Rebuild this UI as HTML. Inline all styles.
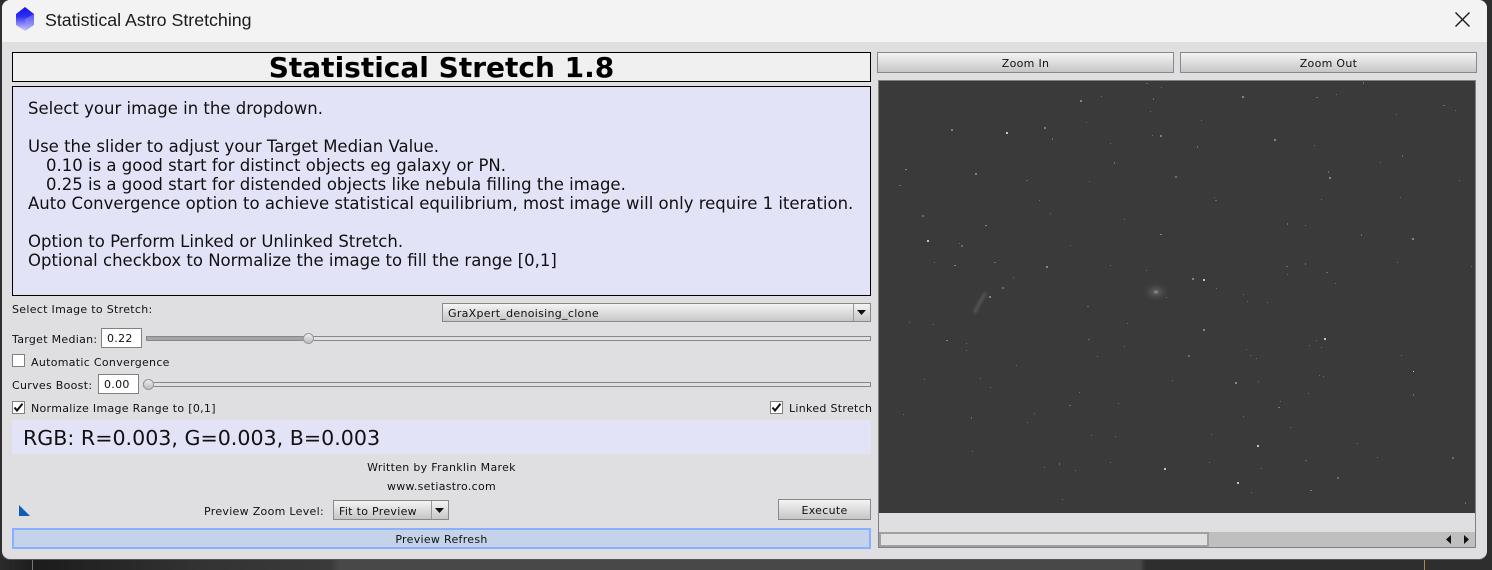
<!DOCTYPE html>
<html><head><meta charset="utf-8"><style>
html,body{margin:0;padding:0;background:#2e2e2e;width:1492px;height:570px;overflow:hidden}
*{box-sizing:border-box}
.a{position:absolute;white-space:pre}
body{font-family:"DejaVu Sans",sans-serif;color:#111}
.s{font-size:11px;line-height:14px;letter-spacing:.3px}
.btn{position:absolute;border:1px solid #888;background:linear-gradient(#f4f4f4,#c6c6c6);font-size:11px;letter-spacing:.3px;text-align:center;color:#111}
.cb{position:absolute;width:13px;height:13px;background:#fff;border:1px solid #808080}
.l{position:absolute;left:28px;font-size:16.5px;line-height:19px;white-space:pre;color:#111}
</style></head><body>
<div class="a" style="left:0;top:559px;width:1492px;height:11px;background:linear-gradient(90deg,#2b2b2b 0,#1c1c1c 36px,#333 200px,#3a3a3a 330px,#484848 340px,#484848 1140px,#2e2e2e 1146px)"></div>
<div class="a" style="left:32px;top:559px;width:1px;height:11px;background:#777"></div>
<div class="a" style="left:1424px;top:559px;width:1px;height:11px;background:#a98850"></div>
<div class="a" style="left:2px;top:0;width:1485px;height:559px;background:#dfdfe1;border-radius:8px;box-shadow:0 1px 0 #555"></div>
<div class="a" style="left:2px;top:0;width:1485px;height:42px;background:#f3f3f3;border-radius:8px 8px 0 0"></div>
<svg class="a" style="left:14px;top:6px" width="24" height="26" viewBox="0 0 24 26"><defs><linearGradient id="g" x1="0" y1="0" x2="0" y2="1"><stop offset="0" stop-color="#1212f0"/><stop offset=".4" stop-color="#3030f0"/><stop offset="1" stop-color="#d4d4ff"/></linearGradient></defs><path d="M11 1 20 8V19L11 25 2 19V8Z" fill="url(#g)"/><path d="M11 13 20 8V19L11 25Z" fill="#9a9af4" opacity=".45"/></svg>
<div class="a" style="left:45px;top:9px;font-family:'Liberation Sans',sans-serif;font-size:17.8px;line-height:23px;color:#1a1a1a">Statistical Astro Stretching</div>
<svg class="a" style="left:1454px;top:11px" width="18" height="18"><path d="M1.500 1.500 15.500 15.500M15.500 1.500 1.500 15.500" stroke="#1a1a1a" stroke-width="1.400" fill="none"/></svg>

<div class="a" style="left:12px;top:52px;width:859px;height:30px;background:#f0f0f0;border:1px solid #000;text-align:center;font-weight:bold;font-size:28px;line-height:29px;color:#000">Statistical Stretch 1.8</div>
<div class="a" style="left:12px;top:86px;width:859px;height:210px;background:#e3e3f8;border:1px solid #000"></div>
<div class="l" style="top:99px">Select your image in the dropdown.</div>
<div class="l" style="top:137px">Use the slider to adjust your Target Median Value.</div>
<div class="l" style="top:156px;left:46px">0.10 is a good start for distinct objects eg galaxy or PN.</div>
<div class="l" style="top:175px;left:46px">0.25 is a good start for distended objects like nebula filling the image.</div>
<div class="l" style="top:194px">Auto Convergence option to achieve statistical equilibrium, most image will only require 1 iteration.</div>
<div class="l" style="top:232px">Option to Perform Linked or Unlinked Stretch.</div>
<div class="l" style="top:251px">Optional checkbox to Normalize the image to fill the range [0,1]</div>

<div class="a s" style="left:12px;top:303px">Select Image to Stretch:</div>
<div class="btn" style="left:442px;top:303px;width:429px;height:19px"></div>
<div class="a s" style="left:448px;top:307px">GraXpert_denoising_clone</div>
<div class="a" style="left:853px;top:304px;width:1px;height:17px;background:#999"></div>
<svg class="a" style="left:856px;top:309px" width="11" height="7"><path d="M1 1H10L5.500 6Z" fill="#111"/></svg>

<div class="a s" style="left:12px;top:333px">Target Median:</div>
<div class="a s" style="left:101px;top:328px;width:41px;height:20px;background:#fff;border:1px solid #808080;padding-left:5px;line-height:20px">0.22</div>
<div class="a" style="left:146px;top:336px;width:725px;height:5px;background:#e0e0e0;border:1px solid #888"></div>
<div class="a" style="left:146px;top:336px;width:162px;height:5px;background:#a4a4a4;border:1px solid #888"></div>
<div class="a" style="left:303px;top:333px;width:11px;height:11px;border-radius:50%;background:linear-gradient(#eee,#bbb);border:1px solid #999"></div>

<div class="cb" style="left:12px;top:354px"></div>
<div class="a s" style="left:31px;top:356px">Automatic Convergence</div>

<div class="a s" style="left:12px;top:379px">Curves Boost:</div>
<div class="a s" style="left:98px;top:374px;width:41px;height:20px;background:#fff;border:1px solid #808080;padding-left:5px;line-height:20px">0.00</div>
<div class="a" style="left:143px;top:382px;width:728px;height:5px;background:#e0e0e0;border:1px solid #888"></div>
<div class="a" style="left:143px;top:379px;width:11px;height:11px;border-radius:50%;background:linear-gradient(#eee,#bbb);border:1px solid #999"></div>

<div class="cb" style="left:12px;top:401px"></div>
<svg class="a" style="left:13px;top:402px" width="11" height="11"><path d="M1.500 5.500 4 8.500 9.500 1.800" stroke="#111" stroke-width="2" fill="none"/></svg>
<div class="a s" style="left:31px;top:402px">Normalize Image Range to [0,1]</div>
<div class="cb" style="left:770px;top:401px"></div>
<svg class="a" style="left:771px;top:402px" width="11" height="11"><path d="M1.500 5.500 4 8.500 9.500 1.800" stroke="#111" stroke-width="2" fill="none"/></svg>
<div class="a s" style="left:789px;top:402px">Linked Stretch</div>

<div class="a" style="left:12px;top:420px;width:859px;height:34px;background:#e3e3f8;font-size:20.600px;line-height:36px;padding-left:11px">RGB: R=0.003, G=0.003, B=0.003</div>
<div class="a s" style="left:12px;top:461px;width:859px;text-align:center">Written by Franklin Marek</div>
<div class="a s" style="left:12px;top:480px;width:859px;text-align:center">www.setiastro.com</div>

<svg class="a" style="left:19px;top:505px" width="11" height="11"><path d="M0 0 11 11H0Z" fill="#0f5db5"/></svg>
<div class="a s" style="left:204px;top:505px">Preview Zoom Level:</div>
<div class="btn" style="left:333px;top:500px;width:116px;height:20px"></div>
<div class="a s" style="left:339px;top:505px">Fit to Preview</div>
<div class="a" style="left:431px;top:501px;width:1px;height:18px;background:#999"></div>
<svg class="a" style="left:434px;top:507px" width="11" height="7"><path d="M1 1H10L5.500 6Z" fill="#111"/></svg>
<div class="btn" style="left:778px;top:499px;width:93px;height:21px;line-height:21px">Execute</div>
<div class="a s" style="left:12px;top:528px;width:859px;height:21px;background:#c5d3ea;border:2px solid #88b0ff;text-align:center;line-height:19px">Preview Refresh</div>

<div class="btn" style="left:877px;top:52px;width:297px;height:21px;line-height:21px">Zoom In</div>
<div class="btn" style="left:1180px;top:52px;width:297px;height:21px;line-height:21px">Zoom Out</div>

<div class="a" style="left:878px;top:80px;width:598px;height:468px;border:1px solid #808080;background:#dfdfe1"></div>
<svg class="a" style="left:879px;top:81px" width="596" height="432" viewBox="879 81 596 432">
<defs><radialGradient id="gal"><stop offset="0" stop-color="#a0a0a0"/><stop offset=".2" stop-color="#5c5c5c" stop-opacity=".8"/><stop offset="1" stop-color="#3a3a3a" stop-opacity="0"/></radialGradient><filter id="bl" x="-50%" y="-50%" width="200%" height="200%"><feGaussianBlur stdDeviation="1.200"/></filter></defs>
<rect x="879" y="81" width="596" height="432" fill="#3a3a3a"/>
<ellipse cx="1156" cy="292" rx="15" ry="11" fill="url(#gal)"/>
<path d="M975 312Q979 303 985 294" stroke="#565656" stroke-width="3" fill="none" stroke-linecap="round" filter="url(#bl)"/>
<path fill="#d0c0c4" d="M927 240h2v2h-2zM1006 132h2v2h-2zM1257 445h2v2h-2zM1324 338h2v2h-2zM1164 468h2v2h-2zM1203 279h2v2h-2zM1237 482h2v2h-2zM1413 371h1v1h-1z"/>
<path fill="#8f7c84" d="M951 129h2v2h-2zM1044 127h2v2h-2zM975 173h2v2h-2zM905 169h2v1h-2zM985 225h2v1h-2zM954 265h2v1h-2zM1046 266h2v2h-2zM1160 234h2v1h-2zM1160 135h2v2h-2zM1242 96h2v2h-2zM1412 238h2v2h-2zM1192 278h2v2h-2zM1203 329h2v2h-2zM946 340h2v1h-2zM1310 490h2v1h-2zM989 296h2v2h-2zM1080 100h2v2h-2zM1274 139h2v2h-2zM1329 177h2v2h-2zM1235 382h2v2h-2zM1278 407h2v1h-2z"/>
<path fill="#6c6c6c" d="M1052 138h1v2h-1zM899 185h2v1h-2zM1026 180h2v1h-2zM922 215h2v2h-2zM961 245h2v2h-2zM994 262h2v1h-2zM1110 265h1v1h-1zM1146 270h1v1h-1zM1175 176h2v2h-2zM1153 98h1v2h-1zM1150 111h1v1h-1zM1161 87h1v1h-1zM1146 83h2v1h-2zM1101 96h1v1h-1zM1114 162h1v2h-1zM1002 287h2v2h-2zM1039 200h1v1h-1zM1086 122h1v1h-1zM1110 143h1v1h-1zM1152 135h1v1h-1zM1089 181h1v1h-1zM1013 277h1v1h-1zM934 262h1v1h-1zM959 243h1v1h-1zM1050 213h1v1h-1zM1124 219h1v1h-1zM1070 245h1v1h-1zM1316 97h2v1h-2zM1201 120h1v1h-1zM1197 146h1v2h-1zM1314 145h1v1h-1zM1396 114h1v1h-1zM1443 105h2v1h-2zM1455 110h1v1h-1zM1363 82h1v2h-1zM1336 94h1v1h-1zM1402 155h1v2h-1zM1380 162h1v1h-1zM1328 171h1v2h-1zM1459 180h1v1h-1zM1215 200h2v1h-2zM1214 197h1v1h-1zM1400 197h1v1h-1zM1287 223h1v2h-1zM1305 225h1v1h-1zM1361 234h1v2h-1zM1287 274h1v1h-1zM1305 263h1v2h-1zM1326 272h2v1h-2zM1471 266h1v1h-1zM1397 262h1v1h-1zM1216 288h1v1h-1zM1335 283h1v1h-1zM1243 294h1v1h-1zM1321 199h1v1h-1zM1286 266h2v1h-2zM1087 306h2v1h-2zM1166 297h1v1h-1zM909 322h1v1h-1zM933 324h1v1h-1zM966 343h1v1h-1zM966 350h1v1h-1zM1088 339h2v1h-2zM1127 323h1v1h-1zM990 387h1v1h-1zM1016 365h1v1h-1zM924 379h1v1h-1zM1034 413h1v1h-1zM1079 392h1v1h-1zM971 417h1v2h-1zM903 414h1v1h-1zM1027 422h1v1h-1zM1115 436h1v1h-1zM1091 435h1v1h-1zM1059 463h1v2h-1zM1044 467h1v1h-1zM1110 462h1v1h-1zM1075 470h1v1h-1zM1062 499h1v1h-1zM972 451h1v1h-1zM1069 405h2v1h-2zM1097 356h1v1h-1zM1124 346h1v1h-1zM1172 380h1v1h-1zM1118 403h1v1h-1zM980 378h1v1h-1zM1188 355h2v2h-2zM1247 301h1v1h-1zM1267 302h1v1h-1zM1309 345h1v1h-1zM1316 340h1v1h-1zM1321 347h1v1h-1zM1256 358h1v1h-1zM1250 355h1v1h-1zM1246 349h1v1h-1zM1258 381h1v1h-1zM1308 393h1v1h-1zM1280 401h1v1h-1zM1401 355h1v1h-1zM1323 376h1v1h-1zM1319 375h1v1h-1zM1211 434h1v1h-1zM1357 443h1v1h-1zM1377 457h1v1h-1zM1305 460h2v1h-2zM1337 477h2v2h-2zM1310 490h1v1h-1zM1452 457h2v2h-2zM1465 502h1v2h-1zM1209 462h1v1h-1zM1290 427h1v1h-1zM1243 416h1v1h-1zM1413 394h1v2h-1zM1261 468h1v1h-1zM1251 492h1v1h-1z"/>
</svg>

<div class="a" style="left:879px;top:532px;width:596px;height:15px;background:#bfbfbf"></div>
<div class="a" style="left:879px;top:532px;width:330px;height:15px;background:#e1e1e1;border:2px solid #a0a0a0"></div>
<svg class="a" style="left:1445px;top:533px" width="28" height="13"><path d="M1 6.500 6 2V11ZM19 2 24 6.500 19 11Z" fill="#111"/></svg>
</body></html>
